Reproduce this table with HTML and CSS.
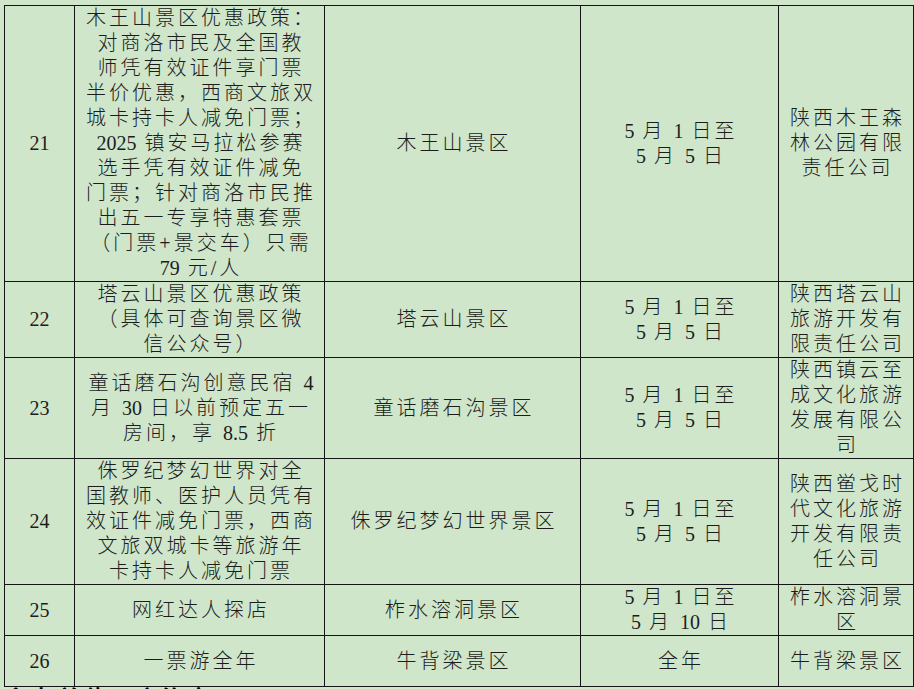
FILE: index.html
```html
<!DOCTYPE html>
<html lang="zh-CN">
<head>
<meta charset="utf-8">
<title>优惠政策</title>
<link rel="stylesheet" href="styles.css">
</head>
<body>
<div class="page">
  <table class="grid">
    <colgroup>
      <col class="c-no"><col class="c-policy"><col class="c-site"><col class="c-date"><col class="c-org">
    </colgroup>
    <tbody>
      <tr>
        <td class="num">21</td>
        <td class="txt">木王山景区优惠政策：<br>对商洛市民及全国教<br>师凭有效证件享门票<br>半价优惠，西商文旅双<br>城卡持卡人减免门票；<br><span class="lat">2025</span> 镇安马拉松参赛<br>选手凭有效证件减免<br>门票；针对商洛市民推<br>出五一专享特惠套票<br>（门票+景交车）只需<br><span class="lat">79</span> 元/人</td>
        <td class="txt">木王山景区</td>
        <td class="txt"><span class="lat">5</span> 月 <span class="lat">1</span> 日至<br><span class="lat">5</span> 月 <span class="lat">5</span> 日</td>
        <td class="txt">陕西木王森<br>林公园有限<br>责任公司</td>
      </tr>
      <tr>
        <td class="num">22</td>
        <td class="txt">塔云山景区优惠政策<br>（具体可查询景区微<br>信公众号）</td>
        <td class="txt">塔云山景区</td>
        <td class="txt"><span class="lat">5</span> 月 <span class="lat">1</span> 日至<br><span class="lat">5</span> 月 <span class="lat">5</span> 日</td>
        <td class="txt">陕西塔云山<br>旅游开发有<br>限责任公司</td>
      </tr>
      <tr>
        <td class="num">23</td>
        <td class="txt">童话磨石沟创意民宿 <span class="lat">4</span><br>月 <span class="lat">30</span> 日以前预定五一<br>房间，享 <span class="lat">8.5</span> 折</td>
        <td class="txt">童话磨石沟景区</td>
        <td class="txt"><span class="lat">5</span> 月 <span class="lat">1</span> 日至<br><span class="lat">5</span> 月 <span class="lat">5</span> 日</td>
        <td class="txt">陕西镇云至<br>成文化旅游<br>发展有限公<br>司</td>
      </tr>
      <tr>
        <td class="num">24</td>
        <td class="txt">侏罗纪梦幻世界对全<br>国教师、医护人员凭有<br>效证件减免门票，西商<br>文旅双城卡等旅游年<br>卡持卡人减免门票</td>
        <td class="txt">侏罗纪梦幻世界景区</td>
        <td class="txt"><span class="lat">5</span> 月 <span class="lat">1</span> 日至<br><span class="lat">5</span> 月 <span class="lat">5</span> 日</td>
        <td class="txt">陕西鲎戈时<br>代文化旅游<br>开发有限责<br>任公司</td>
      </tr>
      <tr>
        <td class="num">25</td>
        <td class="txt">网红达人探店</td>
        <td class="txt">柞水溶洞景区</td>
        <td class="txt"><span class="lat">5</span> 月 <span class="lat">1</span> 日至<br><span class="lat">5</span> 月 <span class="lat">10</span> 日</td>
        <td class="txt">柞水溶洞景<br>区</td>
      </tr>
      <tr class="r26">
        <td class="num">26</td>
        <td class="txt">一票游全年</td>
        <td class="txt">牛背梁景区</td>
        <td class="txt">全年</td>
        <td class="txt">牛背梁景区</td>
      </tr>
    </tbody>
  </table>
  <p class="note">主办单位：商洛市</p>
</div>
</body>
</html>
```
FILE: styles.css
```css
html, body {
  margin: 0;
  padding: 0;
  background: #cfe6cb;
}
body {
  width: 914px;
  height: 689px;
  overflow: hidden;
  font-family: "Liberation Serif", "Noto Sans CJK SC", serif;
  color: #1c1c1c;
}
.page {
  padding: 5px 0 0 4px;
}
.grid {
  border-collapse: collapse;
  table-layout: fixed;
  width: 909px;
}
.c-no { width: 70px; }
.c-policy { width: 250px; }
.c-site { width: 256px; }
.c-date { width: 198px; }
.c-org { width: 135px; }
.grid td {
  border: 1px solid #141414;
  padding: 0;
  text-align: center;
  vertical-align: middle;
  font-size: 20px;
  line-height: 25px;
  white-space: nowrap;
  font-weight: 300;
}
.grid td.txt {
  letter-spacing: 3px;
  padding-left: 3px;
}
.grid td.num {
  letter-spacing: 0;
}
.lat {
  letter-spacing: 0;
}
.r26 td {
  height: 50px;
}
.note {
  margin: 0 0 0 2px;
  font-size: 22px;
  line-height: 24px;
  letter-spacing: 4px;
  color: #000;
  font-weight: 700;
}
```
